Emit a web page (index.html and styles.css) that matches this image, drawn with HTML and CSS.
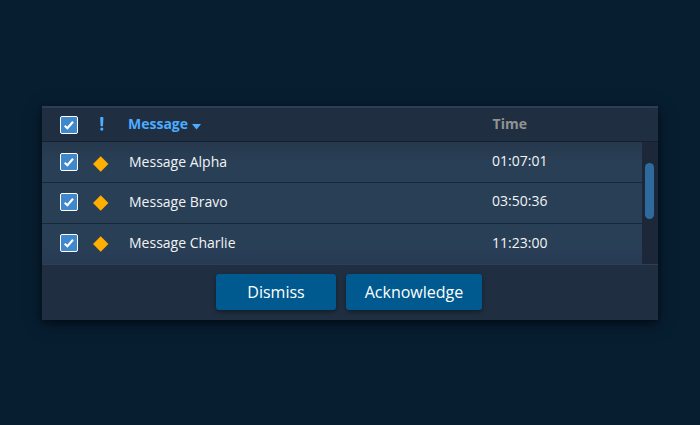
FILE: index.html
```html
<!DOCTYPE html>
<html lang="en">
<head>
<meta charset="utf-8">
<title>Messages</title>
<link rel="stylesheet" href="styles.css">
</head>
<body>
<svg class="defs" width="0" height="0" aria-hidden="true">
  <symbol id="check" viewBox="0 0 18 18"><path d="M4.7 9.7 7.4 12.3 13 5.8" fill="none" stroke="#fff" stroke-width="2.1"/></symbol>
  <symbol id="diamond" viewBox="0 0 16 16"><path d="M7.7 .3 15.4 8 7.7 15.7 0 8Z" fill="#ffaf00"/></symbol>
</svg>
<main class="panel">
  <header class="head">
    <span class="checkbox"><svg><use href="#check"/></svg></span>
    <svg class="alert" viewBox="0 0 4 14"><path d="M.2.9Q.2 0 1 0H2.5Q3.4 0 3.4.9L3 9.2H.6Z"/><circle cx="1.8" cy="12.1" r="1.6"/></svg>
    <span class="message sorted">Message<svg class="arrow" viewBox="0 0 9 6"><path d="M0 0H9L4.5 5.6Z"/></svg></span>
    <span class="time">Time</span>
  </header>
  <section class="body">
    <div class="rows">
      <div class="row first"><span class="checkbox"><svg><use href="#check"/></svg></span><svg class="diamond"><use href="#diamond"/></svg><span class="message">Message Alpha</span><span class="time">01:07:01</span></div>
      <div class="row"><span class="checkbox"><svg><use href="#check"/></svg></span><svg class="diamond"><use href="#diamond"/></svg><span class="message">Message Bravo</span><span class="time">03:50:36</span></div>
      <div class="row last"><span class="checkbox"><svg><use href="#check"/></svg></span><svg class="diamond"><use href="#diamond"/></svg><span class="message">Message Charlie</span><span class="time">11:23:00</span></div>
    </div>
    <div class="track"><div class="thumb"></div></div>
  </section>
  <footer class="foot">
    <button class="btn dismiss">Dismiss</button>
    <button class="btn ack">Acknowledge</button>
  </footer>
</main>
</body>
</html>
```
FILE: styles.css
```css
* { box-sizing: border-box; }
body {
  margin: 0;
  height: 425px;
  padding: 106px 42px 0;
  background: #071e31;
  font: 14px/20px "Open Sans", sans-serif;
  color: #f1f4f6;
  overflow: hidden;
}
.defs { display: none; }
.panel {
  width: 616px;
  height: 214px;
  background: #1f2f41;
  box-shadow: 0 4px 14px rgba(0, 0, 0, .5), 0 2px 4px rgba(0, 0, 0, .3);
}
.head, .row {
  display: grid;
  grid-template-columns: 18px 15px 20px 379px 1fr;
  align-items: center;
}
.head {
  height: 36px;
  padding: 2px 0 1px 18px;
  border-top: 2px solid #2a3f53;
  border-bottom: 1px solid #14202d;
  font-weight: 700;
}
.checkbox {
  display: block;
  width: 18px;
  height: 18px;
  border: 1px solid #fff;
  border-radius: 2px;
  background: #3f88cb;
}
.checkbox svg { display: block; width: 18px; height: 18px; margin: -1px; }
.alert {
  grid-column: 3;
  width: 4px;
  height: 14px;
  margin: -2px 0 0 7px;
  fill: #4dacff;
}
.message { grid-column: 4; padding-left: 16px; }
.time { grid-column: 5; }
.sorted { padding-left: 15px; color: #4dacff; }
.arrow { width: 9px; height: 6px; margin-left: 4px; fill: #4dacff; vertical-align: -1px; }
.head .message, .head .time { margin-top: -2px; }
.head .time { padding-left: .6px; color: #929292; }
.body { display: flex; height: 122px; }
.rows {
  width: 600px;
  background: linear-gradient(#26384d, #293f56 20px, #293f56 104px, #283a54);
}
.row { height: 41px; padding: 0 0 2px 18px; border-bottom: 1px solid #172838; }
.first { padding-bottom: 0; }
.last { height: 40px; border: 0; }
.diamond { grid-column: 3; width: 16px; height: 16px; margin-top: 2px; }
.first .diamond { margin-top: 3px; }
.head .alert, .diamond { justify-self: start; }
.row .time { margin-top: -2px; }
.last .time { margin-top: 0; }
.track { width: 16px; padding: 21px 0 0 3px; background: #1c273a; }
.thumb { width: 9px; height: 56px; border-radius: 5px; background: #2f6a9f; }
.foot {
  display: flex;
  justify-content: center;
  gap: 10px;
  height: 56px;
  padding: 9px 2px 0 0;
  border-top: 1px solid #2d4052;
}
.last .diamond, .row:not(.first) .diamond { margin-top: 1px; }
.btn {
  height: 36px;
  padding: 0;
  border: 0;
  border-radius: 3px;
  background: #005a8f;
  box-shadow: 0 2px 4px rgba(0, 0, 0, .4);
  color: #fff;
  font: 16px/36px "Open Sans", sans-serif;
}
.dismiss { width: 120px; }
.ack { width: 136px; }
```
